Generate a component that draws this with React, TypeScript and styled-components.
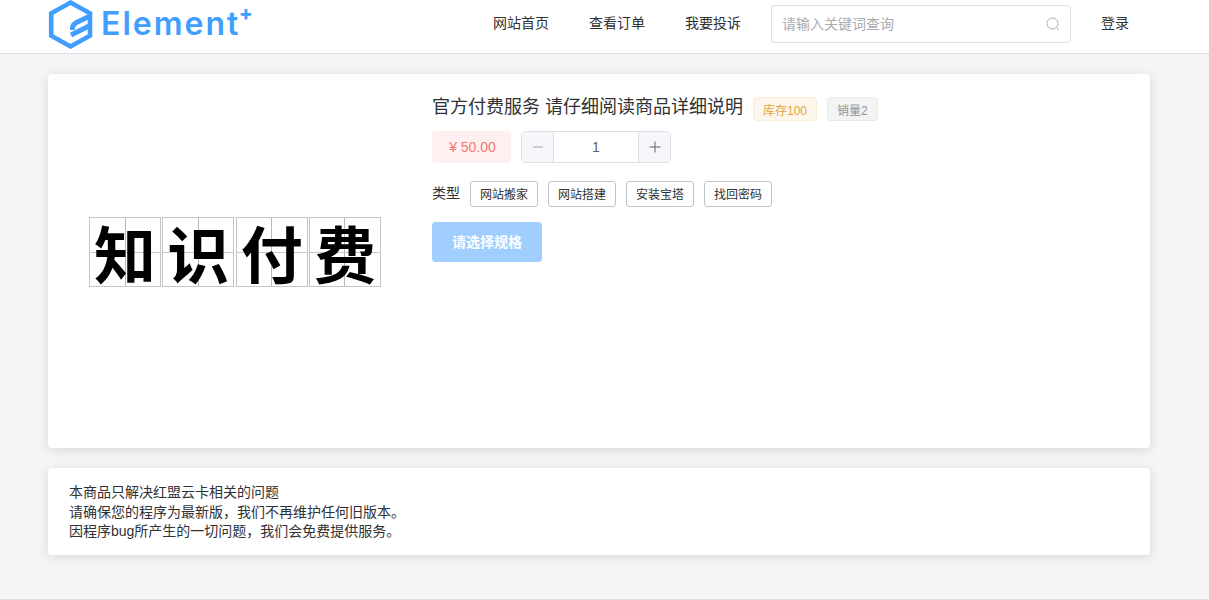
import React from "react";
import styled, { createGlobalStyle } from "styled-components";

const Global = createGlobalStyle`
  html, body { margin: 0; padding: 0; background: #f5f5f5; }
  body { font-family: "Liberation Sans", "Noto Sans CJK SC", sans-serif; color: #303133; }
  * { box-sizing: border-box; }
`;

const Page = styled.div`
  height: 600px;
  border-bottom: 1px solid #dcdfe6;
  overflow: hidden;
`;
const Header = styled.header`
  height: 54px;
  background: #fff;
  border-bottom: 1px solid #dcdfe6;
  display: flex;
  align-items: center;
  padding: 0 80px 5px 48px;
`;
const Logo = styled.div`
  width: 203px;
  height: 49px;
  display: flex;
  align-items: flex-start;
  gap: 8px;
  position: relative;
`;
const LogoText = styled.span`
  font-family: "Inter", sans-serif;
  font-size: 32px;
  font-weight: 600;
  line-height: 48px;
  letter-spacing: 2px;
  color: #409eff;
`;
const LogoPlus = styled.span`
  position: absolute;
  left: 191px;
  top: 1px;
  font-family: "Inter", sans-serif;
  font-size: 20px;
  font-weight: 800;
  line-height: 24px;
  color: #409eff;
`;
const Nav = styled.nav`
  margin-left: auto;
  display: flex;
  align-items: center;
  gap: 40px;
`;
const NavLink = styled.a`
  font-size: 14px;
  line-height: 20px;
  padding-bottom: 2px;
  color: #303133;
`;
const Search = styled.div`
  width: 300px;
  height: 38px;
  margin-left: 30px;
  padding: 0 10px;
  display: flex;
  align-items: center;
  justify-content: space-between;
  background: #fff;
  border: 1px solid #dcdfe6;
  border-radius: 4px;
  font-size: 14px;
  color: #a8abb2;
`;
const Placeholder = styled.span`
  padding-bottom: 2px;
`;
const Login = styled(NavLink)`
  margin-left: 30px;
`;
const Main = styled.main`
  padding: 20px 59px 0 48px;
  display: flex;
  flex-direction: column;
  gap: 20px;
`;
const Card = styled.section`
  background: #fff;
  border-radius: 4px;
  box-shadow: 0 2px 12px rgba(0, 0, 0, 0.12);
`;
const ProductCard = styled(Card)`
  height: 374px;
  padding: 20px;
  display: flex;
  gap: 30px;
`;
const Pane = styled.div`
  width: 334px;
  height: 316px;
  display: flex;
  align-items: center;
  justify-content: center;
`;
const Glyphs = styled.div`
  display: flex;
  gap: 1.3px;
`;
const GlyphCell = styled.span`
  width: 72px;
  height: 70px;
  display: flex;
  align-items: center;
  justify-content: center;
  border: 1px solid #c4c4c4;
  font-family: "Noto Sans CJK SC", sans-serif;
  font-size: 62px;
  font-weight: 700;
  line-height: 1;
  color: #000;
  background:
    linear-gradient(#b8b8b8, #b8b8b8) center / 1px 100% no-repeat,
    linear-gradient(#c8c8c8, #c8c8c8) center / 100% 1px no-repeat,
    #fff;
`;
const Info = styled.div`
  flex: 1;
  display: flex;
  flex-direction: column;
  align-items: flex-start;
`;
const TitleRow = styled.div`
  height: 26px;
  margin-top: 2px;
  display: flex;
  align-items: center;
  gap: 10px;
`;
const Title = styled.h1`
  margin: 0 0 4px;
  font-size: 18px;
  font-weight: 400;
  line-height: 26px;
  color: #303133;
`;
const Tag = styled.span<{ $tone: "warning" | "gray" }>`
  height: 24px;
  padding: 0 9px;
  display: inline-flex;
  align-items: center;
  font-size: 12px;
  border-radius: 4px;
  border: 1px solid ${(p) => (p.$tone === "warning" ? "#faecd8" : "#e9e9eb")};
  background: ${(p) => (p.$tone === "warning" ? "#fdf6ec" : "#f4f4f5")};
  color: ${(p) => (p.$tone === "warning" ? "#e6a23c" : "#909399")};
`;
const BuyRow = styled.div`
  margin-top: 9px;
  display: flex;
  gap: 10px;
`;
const Price = styled.div`
  width: 79px;
  height: 32px;
  padding-left: 2px;
  display: flex;
  align-items: center;
  justify-content: center;
  background: #fef0f0;
  border-radius: 4px;
  font-size: 14px;
  color: #ee7a76;
`;
const Stepper = styled.div`
  width: 150px;
  height: 32px;
  display: flex;
  border: 1px solid #dcdfe6;
  border-radius: 4px;
  overflow: hidden;
`;
const StepButton = styled.span`
  width: 31px;
  display: flex;
  align-items: center;
  justify-content: center;
  background: #f5f7fa;
  color: #606266;
`;
const StepValue = styled.span`
  flex: 1;
  display: flex;
  align-items: center;
  justify-content: center;
  font-size: 14px;
  color: #606266;
  border-left: 1px solid #dcdfe6;
  border-right: 1px solid #dcdfe6;
`;
const SpecRow = styled.div`
  height: 26px;
  margin-top: 18px;
  display: flex;
  align-items: center;
  gap: 10px;
`;
const SpecLabel = styled.span`
  font-size: 14px;
  line-height: 20px;
  margin-bottom: 2px;
  color: #303133;
`;
const SpecOption = styled.span`
  width: 68px;
  height: 26px;
  padding-bottom: 2px;
  display: flex;
  align-items: center;
  justify-content: center;
  background: #fff;
  border: 1px solid #c0c4cc;
  border-radius: 3px;
  font-size: 12px;
  color: #303133;
`;
const BuyButton = styled.div`
  margin-top: 15px;
  width: 110px;
  height: 40px;
  padding-bottom: 2px;
  display: flex;
  align-items: center;
  justify-content: center;
  background: #a0cfff;
  border-radius: 4px;
  font-size: 14px;
  font-weight: 700;
  color: #fff;
`;
const NoticeCard = styled(Card)`
  height: 87px;
  padding: 15px 21px;
  font-size: 14px;
  line-height: 19.5px;
  color: #303133;
`;
const NoticeLine = styled.div``;

const HexLogo = () => (
  <svg width="45" height="49" viewBox="0 0 45 49" fill="none">
    <path d="M22.5 2.6 L42 13.3 V35.7 L22.5 46.4 L3.2 35.7 V13.3 Z" stroke="#409eff" strokeWidth="4.6" />
    <path d="M42 16 L28.5 22.5 Q24.5 24.5 24.5 28 V30" stroke="#409eff" strokeWidth="4.8" />
    <path d="M42 25.5 L23 35" stroke="#409eff" strokeWidth="5" />
  </svg>
);

const SearchIcon = () => (
  <svg width="14" height="14" viewBox="0 0 14 14" fill="none" stroke="#a8abb2" strokeWidth="1">
    <circle cx="6.5" cy="6.5" r="5.5" />
    <path d="M10.6 10.6 L13 13" />
  </svg>
);

const MinusIcon = () => (
  <svg width="12" height="12" viewBox="0 0 12 12" stroke="#a8abb2" strokeWidth="1">
    <path d="M1 6 H11" />
  </svg>
);

const PlusIcon = () => (
  <svg width="12" height="12" viewBox="0 0 12 12" stroke="#606266" strokeWidth="1">
    <path d="M0.5 6 H11.5 M6 0.5 V11.5" />
  </svg>
);

export default function App() {
  return (
    <Page>
      <Global />
      <Header>
        <Logo>
          <HexLogo />
          <LogoText>Element</LogoText>
          <LogoPlus>+</LogoPlus>
        </Logo>
        <Nav>
          <NavLink>网站首页</NavLink>
          <NavLink>查看订单</NavLink>
          <NavLink>我要投诉</NavLink>
        </Nav>
        <Search>
          <Placeholder>请输入关键词查询</Placeholder>
          <SearchIcon />
        </Search>
        <Login>登录</Login>
      </Header>
      <Main>
        <ProductCard>
          <Pane>
            <Glyphs>
              {["知", "识", "付", "费"].map((c) => (
                <GlyphCell key={c}>{c}</GlyphCell>
              ))}
            </Glyphs>
          </Pane>
          <Info>
            <TitleRow>
              <Title>官方付费服务 请仔细阅读商品详细说明</Title>
              <Tag $tone="warning">库存100</Tag>
              <Tag $tone="gray">销量2</Tag>
            </TitleRow>
            <BuyRow>
              <Price>¥ 50.00</Price>
              <Stepper>
                <StepButton><MinusIcon /></StepButton>
                <StepValue>1</StepValue>
                <StepButton><PlusIcon /></StepButton>
              </Stepper>
            </BuyRow>
            <SpecRow>
              <SpecLabel>类型</SpecLabel>
              {["网站搬家", "网站搭建", "安装宝塔", "找回密码"].map((s) => (
                <SpecOption key={s}>{s}</SpecOption>
              ))}
            </SpecRow>
            <BuyButton>请选择规格</BuyButton>
          </Info>
        </ProductCard>
        <NoticeCard>
          <NoticeLine>本商品只解决红盟云卡相关的问题</NoticeLine>
          <NoticeLine>请确保您的程序为最新版，我们不再维护任何旧版本。</NoticeLine>
          <NoticeLine>因程序bug所产生的一切问题，我们会免费提供服务。</NoticeLine>
        </NoticeCard>
      </Main>
    </Page>
  );
}
